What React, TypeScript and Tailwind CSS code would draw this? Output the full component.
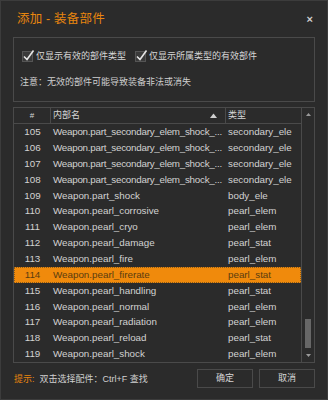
import React from "react";

const rows: [string, string, string][] = [
  ["105", "Weapon.part_secondary_elem_shock_...", "secondary_ele"],
  ["106", "Weapon.part_secondary_elem_shock_...", "secondary_ele"],
  ["107", "Weapon.part_secondary_elem_shock_...", "secondary_ele"],
  ["108", "Weapon.part_secondary_elem_shock_...", "secondary_ele"],
  ["109", "Weapon.part_shock", "body_ele"],
  ["110", "Weapon.pearl_corrosive", "pearl_elem"],
  ["111", "Weapon.pearl_cryo", "pearl_elem"],
  ["112", "Weapon.pearl_damage", "pearl_stat"],
  ["113", "Weapon.pearl_fire", "pearl_elem"],
  ["114", "Weapon.pearl_firerate", "pearl_stat"],
  ["115", "Weapon.pearl_handling", "pearl_stat"],
  ["116", "Weapon.pearl_normal", "pearl_elem"],
  ["117", "Weapon.pearl_radiation", "pearl_elem"],
  ["118", "Weapon.pearl_reload", "pearl_stat"],
  ["119", "Weapon.pearl_shock", "pearl_elem"],
];

const font = { fontFamily: '"Liberation Sans", "Noto Sans CJK SC", sans-serif' };

function Check({ label }: { label: string }) {
  return (
    <div className="flex items-center gap-[3px]">
      <div className="relative w-[11px] h-[11px] bg-[#3a3a3a] border border-[#555]">
        <svg
          className="absolute left-[-1px] top-[-3px]"
          width="13"
          height="13"
          viewBox="0 0 13 13"
        >
          <path d="M2 7.5 L5 10.5 L11.5 1.5" fill="none" stroke="#e6e6e6" strokeWidth="1.6" />
        </svg>
      </div>
      <span className="text-[9px] leading-[12px] text-[#d6d6d6]">{label}</span>
    </div>
  );
}

export default function App() {
  return (
    <div
      className="w-[328px] h-[400px] bg-[#2b2b2b] border border-[#3c3c3c] flex flex-col text-[#d0d0d0] overflow-hidden"
      style={font}
    >
      <div className="h-[36px] flex items-center justify-between pl-[16px] pr-[14px]">
        <span className="text-[12.5px] text-[#e8860e] tracking-[0.2px]">添加 - 装备部件</span>
        <span className="text-[11px] text-[#cfcfcf] leading-none font-bold">×</span>
      </div>

      <div className="mx-[12px] h-[65px] border border-[#4a4a4a] flex flex-col pl-[8px]">
        <div className="flex items-center gap-[9px] mt-[12px] h-[12px]">
          <Check label="仅显示有效的部件类型" />
          <Check label="仅显示所属类型的有效部件" />
        </div>
        <div className="mt-[14px] text-[9px] leading-[12px] text-[#cfcfcf] -ml-[2px]">
          注意：无效的部件可能导致装备非法或消失
        </div>
      </div>

      <div className="mx-[12px] mt-[5px] h-[256px] border border-[#4a4a4a] flex">
        <div className="w-[288px] flex flex-col">
          <div className="h-[17px] flex border-b border-[#4a4a4a] text-[9px] text-[#d6d6d6]">
            <div className="w-[37px] border-r border-[#4a4a4a] flex items-center justify-center text-[8px]">#</div>
            <div className="w-[175px] border-r border-[#4a4a4a] flex items-center justify-between pl-[2px] pr-[8px]">
              <span>内部名</span>
              <svg width="7" height="5" viewBox="0 0 7 5">
                <path d="M0 5 L3.5 0.5 L7 5 Z" fill="#d0d0d0" />
              </svg>
            </div>
            <div className="flex-1 flex items-center pl-[2px]">类型</div>
          </div>
          <div className="flex flex-col">
            {rows.map(([n, name, type]) => {
              const sel = n === "114";
              const long = name.endsWith("...");
              return (
                <div
                  key={n}
                  className={
                    "h-[15.85px] flex items-center text-[9.8px] leading-[14px] whitespace-nowrap " +
                    (sel
                      ? "bg-[#f08a0c] text-[#5a3c10] outline outline-1 outline-dotted outline-offset-[-1px] outline-[#8a5a18]"
                      : "text-[#d2d2d2]")
                  }
                >
                  <div className="w-[37px] text-center">{n}</div>
                  <div
                    className={
                      "w-[175px] pl-[2px] overflow-hidden " + (long ? "tracking-[-0.25px]" : "")
                    }
                  >
                    {name}
                  </div>
                  <div className="flex-1 pl-[2px] overflow-hidden">{type}</div>
                </div>
              );
            })}
          </div>
        </div>
        <div className="w-[13px] border-l border-[#4a4a4a] flex flex-col items-center justify-between py-[5px]">
          <svg width="5" height="3" viewBox="0 0 5 3">
            <path d="M0 3 L2.5 0 L5 3 Z" fill="#9a9a9a" />
          </svg>
          <div className="flex-1 w-full flex flex-col justify-end items-center pb-[6px]">
            <div className="w-[6px] h-[29px] bg-[#676767]" />
          </div>
          <svg width="5" height="3" viewBox="0 0 5 3">
            <path d="M0 0 L2.5 3 L5 0 Z" fill="#9a9a9a" />
          </svg>
        </div>
      </div>

      <div className="mx-[12px] mt-[6px] flex items-center justify-between h-[19px]">
        <div className="flex items-center text-[9px] leading-[12px] pl-[1px]">
          <span className="text-[#e8860e]">提示:</span>
          <span className="ml-[5px] text-[#d0d0d0]">双击选择配件：Ctrl+F 查找</span>
        </div>
        <div className="flex gap-[6px]">
          <div className="w-[56px] h-[19px] border border-[#4a4a4a] flex items-center justify-center text-[9px] text-[#d6d6d6]">
            确定
          </div>
          <div className="w-[56px] h-[19px] border border-[#4a4a4a] flex items-center justify-center text-[9px] text-[#d6d6d6]">
            取消
          </div>
        </div>
      </div>
    </div>
  );
}
